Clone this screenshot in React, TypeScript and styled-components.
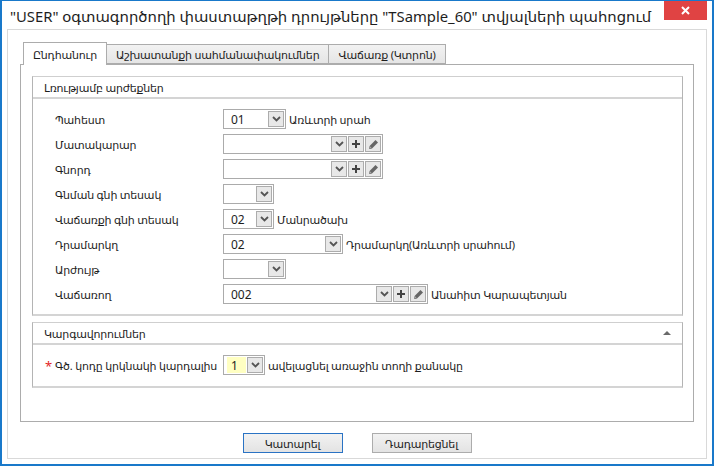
import React from "react";
import styled, { createGlobalStyle } from "styled-components";

const Global = createGlobalStyle`
  html, body { margin: 0; padding: 0; width: 714px; height: 466px; overflow: hidden; background: #fff; }
  body { font-family: "Noto Sans", "DejaVu Sans", sans-serif; font-size: 11px; letter-spacing: -0.2px; color: #1e1e1e; }
  * { box-sizing: border-box; }
`;

const Window = styled.div`
  width: 714px;
  height: 466px;
  border: 2px solid #1979ca;
  border-top-width: 1px;
  display: flex;
  flex-direction: column;
  background: #fff;
`;

const TitleBar = styled.div`
  height: 28px;
  flex-shrink: 0;
  display: flex;
  align-items: flex-start;
  justify-content: space-between;
`;

const Title = styled.div`
  padding: 5px 0 0 8px;
  font-size: 14.8px;
  letter-spacing: 0;
  line-height: 20px;
  white-space: nowrap;
  color: #1e1e1e;
`;

const CloseBtn = styled.div`
  width: 43px;
  height: 19px;
  margin-right: 5px;
  background: #e04343;
  display: flex;
  align-items: center;
  justify-content: center;
`;

const Frame = styled.div`
  flex: 1;
  margin: 0 5px 5px 5px;
  border: 1px solid #d9d9d9;
  padding: 12px 12px 5px 12px;
  display: flex;
  flex-direction: column;
`;

const TabsRow = styled.div`
  display: flex;
  align-items: flex-end;
  padding-left: 3px;
  height: 22px;
  position: relative;
  z-index: 1;
`;

const Tab = styled.div<{ $active?: boolean }>`
  height: ${(p) => (p.$active ? "23px" : "20px")};
  padding: 0 9px;
  display: flex;
  align-items: center;
  white-space: nowrap;
  border: 1px solid #acacac;
  border-bottom: ${(p) => (p.$active ? "none" : "1px solid #acacac")};
  margin-left: ${(p) => (p.$active ? "0" : "-1px")};
  background: ${(p) => (p.$active ? "#fff" : "linear-gradient(#f2f2f2, #e5e5e5)")};
  margin-bottom: ${(p) => (p.$active ? "-1px" : "0")};
`;

const TabPanel = styled.div`
  flex: 1;
  border: 1px solid #acacac;
  padding: 11px 10px 0 11px;
  display: flex;
  flex-direction: column;
  gap: 6px;
`;

const Group = styled.div`
  border: 1px solid #b4b4b4;
  border-top-color: #cfcfcf;
  border-bottom: 2px solid #d4d4d4;
  display: flex;
  flex-direction: column;
`;

const GroupHeader = styled.div`
  height: 22px;
  padding: 0 11px;
  display: flex;
  align-items: center;
  justify-content: space-between;
  border-bottom: 2px solid #d4d4d4;
`;

const CollapseIcon = styled.span`
  width: 0;
  height: 0;
  border-left: 4px solid transparent;
  border-right: 4px solid transparent;
  border-bottom: 4px solid #6a6a6a;
`;

const GroupBody = styled.div<{ $pt: number; $pb: number }>`
  padding: ${(p) => p.$pt}px 0 ${(p) => p.$pb}px 22px;
  display: grid;
  grid-template-columns: 168px 1fr;
  row-gap: 5px;
`;

const Label = styled.div`
  height: 20px;
  display: flex;
  align-items: center;
  white-space: nowrap;
  position: relative;
`;

const Required = styled.span`
  position: absolute;
  left: -10px;
  top: 2px;
  color: #e32626;
  font-size: 13px;
`;

const Field = styled.div`
  height: 20px;
  display: flex;
  align-items: center;
`;

const Combo = styled.div<{ $w: number }>`
  width: ${(p) => p.$w}px;
  height: 20px;
  border: 1px solid #ababab;
  padding: 1px;
  display: flex;
  background: #fff;
`;

const Value = styled.div<{ $hl?: boolean }>`
  flex: 1;
  display: flex;
  align-items: center;
  padding-left: ${(p) => (p.$hl ? "2px" : "6px")};
  font-size: 12px;
  letter-spacing: 0;
`;

const ValueHl = styled.span`
  background: #ffffc2;
  height: 16px;
  width: 19px;
  padding-left: 4px;
  display: flex;
  align-items: center;
`;

const SmallBtn = styled.div`
  width: 16px;
  height: 16px;
  margin-left: 1px;
  border: 1px solid #acacac;
  background: #e8e8e8;
  display: flex;
  align-items: center;
  justify-content: center;
`;

const After = styled.span`
  margin-left: 3px;
  white-space: nowrap;
`;

const Footer = styled.div`
  display: flex;
  justify-content: center;
  gap: 29px;
  padding-top: 11px;
`;

const Button = styled.div<{ $primary?: boolean }>`
  width: 100px;
  height: 20px;
  border: 1px solid ${(p) => (p.$primary ? "#2a73c4" : "#acacac")};
  background: linear-gradient(#f2f2f2, #e3e3e3);
  display: flex;
  align-items: center;
  justify-content: center;
`;

const Chevron = () => (
  <svg width="9" height="6" viewBox="0 0 9 6">
    <path d="M1 1 L4.5 4.5 L8 1" stroke="#555" strokeWidth="1.8" fill="none" />
  </svg>
);

const Plus = () => (
  <svg width="10" height="10" viewBox="0 0 10 10">
    <path d="M5 1 V9 M1 5 H9" stroke="#444" strokeWidth="2" fill="none" />
  </svg>
);

const Pencil = () => (
  <svg width="11" height="11" viewBox="0 0 11 11">
    <path d="M7.5 1 L10 3.5 L4 9.5 L1.5 10 L1.2 9.8 L1.6 7 Z" fill="#666" />
    <path d="M2 9 L2.6 7.6 L3.4 8.4 Z" fill="#ccc" />
  </svg>
);

type Btn = "drop" | "plus" | "edit";

const ComboBox = ({ w, value, btns = ["drop"], hl }: { w: number; value?: string; btns?: Btn[]; hl?: boolean }) => (
  <Combo $w={w}>
    <Value $hl={hl}>{hl ? <ValueHl>{value}</ValueHl> : value}</Value>
    {btns.map((b) => (
      <SmallBtn key={b}>
        {b === "drop" ? <Chevron /> : b === "plus" ? <Plus /> : <Pencil />}
      </SmallBtn>
    ))}
  </Combo>
);

const rows: { label: string; w: number; value?: string; btns?: Btn[]; after?: string }[] = [
  { label: "Պահեստ", w: 63, value: "01", after: "Առևտրի սրահ" },
  { label: "Մատակարար", w: 160, btns: ["drop", "plus", "edit"] },
  { label: "Գնորդ", w: 160, btns: ["drop", "plus", "edit"] },
  { label: "Գնման գնի տեսակ", w: 51 },
  { label: "Վաճառքի գնի տեսակ", w: 51, value: "02", after: "Մանրածախ" },
  { label: "Դրամարկղ", w: 120, value: "02", after: "Դրամարկղ(Առևտրի սրահում)" },
  { label: "Արժույթ", w: 63 },
  { label: "Վաճառող", w: 205, value: "002", btns: ["drop", "plus", "edit"], after: "Անահիտ Կարապետյան" },
];

export default function App() {
  return (
    <>
      <Global />
      <Window>
        <TitleBar>
          <Title>"USER" օգտագործողի փաստաթղթի դրույթները "TSample_60" տվյալների պահոցում</Title>
          <CloseBtn>
            <svg width="9" height="9" viewBox="0 0 9 9">
              <path d="M1 1 L8 8 M8 1 L1 8" stroke="#fff" strokeWidth="2" />
            </svg>
          </CloseBtn>
        </TitleBar>
        <Frame>
          <TabsRow>
            <Tab $active>Ընդհանուր</Tab>
            <Tab>Աշխատանքի սահմանափակումներ</Tab>
            <Tab>Վաճառք (Կտրոն)</Tab>
          </TabsRow>
          <TabPanel>
            <Group>
              <GroupHeader>Լռությամբ արժեքներ</GroupHeader>
              <GroupBody $pt={10} $pb={10}>
                {rows.map((r) => (
                  <React.Fragment key={r.label}>
                    <Label>{r.label}</Label>
                    <Field>
                      <ComboBox w={r.w} value={r.value} btns={r.btns} />
                      {r.after && <After>{r.after}</After>}
                    </Field>
                  </React.Fragment>
                ))}
              </GroupBody>
            </Group>
            <Group>
              <GroupHeader>
                Կարգավորումներ
                <CollapseIcon />
              </GroupHeader>
              <GroupBody $pt={10} $pb={11}>
                <Label>
                  <Required>*</Required>
                  Գծ. կոդը կրկնակի կարդալիս
                </Label>
                <Field>
                  <ComboBox w={42} value="1" hl />
                  <After>ավելացնել առաջին տողի քանակը</After>
                </Field>
              </GroupBody>
            </Group>
          </TabPanel>
          <Footer>
            <Button $primary>Կատարել</Button>
            <Button>Դադարեցնել</Button>
          </Footer>
        </Frame>
      </Window>
    </>
  );
}
